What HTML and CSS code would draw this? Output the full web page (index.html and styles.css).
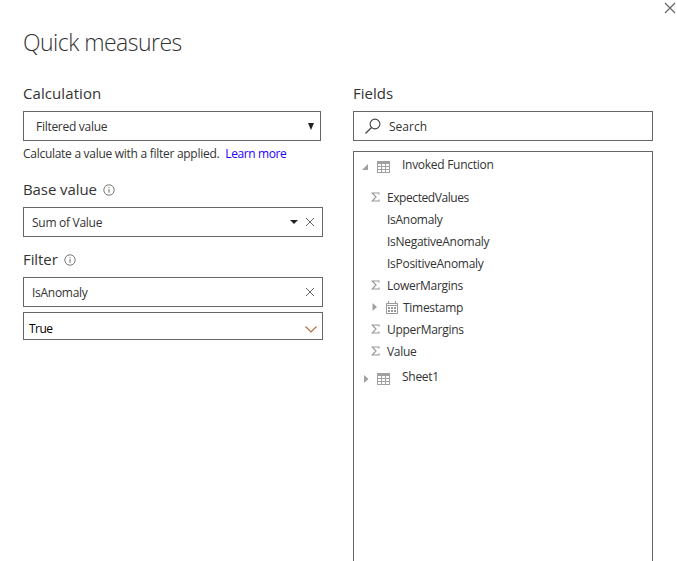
FILE: index.html
```html
<!DOCTYPE html>
<html lang="en">
<head>
<meta charset="utf-8">
<title>Quick measures</title>
<link rel="stylesheet" href="styles.css">
</head>
<body>
<svg class="defs" aria-hidden="true">
  <symbol id="table" viewBox="0 0 13 12"><path d="M0 0h13v12H0z" fill="#a0a0a0"/><path d="M1 3h3v2H1zM5 3h3v2H5zM9 3h3v2H9zM1 6h3v2H1zM5 6h3v2H5zM9 6h3v2H9zM1 9h3v2H1zM5 9h3v2H5zM9 9h3v2H9z" fill="#fff"/></symbol>
  <symbol id="sigma" viewBox="0 0 9 10"><path d="M8 2.5V1H1.200L5 5 1.200 9H8V7.500" fill="none" stroke="#999" stroke-width="1.2"/></symbol>
  <symbol id="closed" viewBox="0 0 5 8"><path d="M.5 0 5 4 .5 8z" fill="#a0a0a0"/></symbol>
  <symbol id="info" viewBox="0 0 12 12"><circle cx="6" cy="6" r="5.2" fill="none" stroke="#666" stroke-width=".9"/><path d="M6 5.2v3.5M6 3.2v1" stroke="#666"/></symbol>
  <symbol id="cross" viewBox="0 0 10 10"><path d="m1 1 8 8M9 1 1 9" fill="none" stroke="#666"/></symbol>
</svg>
<main class="dialog">
  <header class="header">
    <h1>Quick measures</h1>
    <button class="close" aria-label="Close"><svg width="12" height="12" viewBox="0 0 12 12"><path d="m1 1 10 10M11 1 1 11" stroke="#666" stroke-width="1.2"/></svg></button>
  </header>
  <div class="columns">
    <section class="column">
      <h2><span class="t-calc">Calculation</span></h2>
      <div class="box select"><span>Filtered value</span><svg width="6" height="7" viewBox="0 0 6 7"><path d="M0 0h6L3 7z" fill="#222"/></svg></div>
      <p class="hint"><span>Calculate a value with a filter applied.</span><a>Learn more</a></p>
      <h2 class="spaced"><span class="t-base">Base value</span><svg width="12" height="12"><use href="#info"/></svg></h2>
      <div class="box well"><span>Sum of Value</span><svg class="caret" width="8" height="4" viewBox="0 0 8 4"><path d="M0 0h8L4 4z" fill="#222"/></svg><svg width="10" height="10"><use href="#cross"/></svg></div>
      <h2><span class="t-base">Filter</span><svg width="12" height="12"><use href="#info"/></svg></h2>
      <div class="box well"><span>IsAnomaly</span><svg width="10" height="10"><use href="#cross"/></svg></div>
      <div class="box value"><span>True</span><svg width="12" height="7" viewBox="0 0 12 7"><path d="m.5.5 5.5 5.5L11.500.5" fill="none" stroke="#b46a3c" stroke-width="1.1"/></svg></div>
    </section>
    <section class="column">
      <h2><span>Fields</span></h2>
      <div class="box search"><svg width="16" height="16" viewBox="0 0 16 16"><circle cx="10" cy="6" r="4.9" fill="none" stroke="#444" stroke-width="1.1"/><path d="M6.500 9.500.5 15.500" stroke="#444" stroke-width="1.2"/></svg><span>Search</span></div>
      <div class="tree">
        <div class="row root"><svg class="arrow" width="6" height="6" viewBox="0 0 6 6"><path d="M6 0v6H0z" fill="#a0a0a0"/></svg><svg class="table" width="13" height="12"><use href="#table"/></svg><span>Invoked Function</span></div>
        <div class="fields">
          <div class="row"><svg class="sigma" width="9" height="10"><use href="#sigma"/></svg><span class="t-exp">ExpectedValues</span></div>
          <div class="row plain"><span>IsAnomaly</span></div>
          <div class="row plain"><span class="t-neg">IsNegativeAnomaly</span></div>
          <div class="row plain"><span>IsPositiveAnomaly</span></div>
          <div class="row"><svg class="sigma" width="9" height="10"><use href="#sigma"/></svg><span>LowerMargins</span></div>
          <div class="row date"><svg width="5" height="8"><use href="#closed"/></svg><svg class="calendar" width="12" height="13" viewBox="0 0 12 13"><path d="M.5 2.500h11v10H.5zM.5 4.500h11M2.500 0v3M9.500 0v3" fill="none" stroke="#999"/><path d="M2 6h2v2H2zM5 6h2v2H5zM8 6h2v2H8zM2 9h2v2H2zM5 9h2v2H5zM8 9h2v2H8z" fill="#999"/></svg><span>Timestamp</span></div>
          <div class="row"><svg class="sigma" width="9" height="10"><use href="#sigma"/></svg><span>UpperMargins</span></div>
          <div class="row"><svg class="sigma" width="9" height="10"><use href="#sigma"/></svg><span>Value</span></div>
        </div>
        <div class="row root sheet"><svg class="arrow" width="5" height="8"><use href="#closed"/></svg><svg class="table" width="13" height="12"><use href="#table"/></svg><span>Sheet1</span></div>
      </div>
    </section>
  </div>
</main>
</body>
</html>
```
FILE: styles.css
```css
* { box-sizing: border-box; }
body { margin: 0; background: #fff; color: #333; font: 12px/16px "Open Sans", "Noto Sans", sans-serif; letter-spacing: -.28px; overflow: hidden; }
.defs { display: none; }
svg { display: block; flex: none; }
span, a { white-space: nowrap; }
.dialog { height: 561px; display: flex; flex-direction: column; }
.header { height: 83px; padding: 2px 1px 0 23px; display: flex; justify-content: space-between; align-items: flex-start; }
h1 { margin: 24px 0 0; font-size: 23px; line-height: 32px; font-weight: 300; letter-spacing: -.53px; }
.close { display: block; border: 0; padding: 0; margin: 0; background: none; }
.columns { flex: 1; min-height: 0; display: grid; grid-template-columns: 300px 300px; gap: 30px; padding-left: 23px; }
.column { min-height: 0; display: flex; flex-direction: column; }
h2 { margin: 0 0 7px; height: 21px; display: flex; align-items: center; gap: 6px; flex: none; font-size: 15px; font-weight: 400; line-height: 21px; letter-spacing: 0; }
h2 svg { margin-top: 1px; }
.t-calc { letter-spacing: .08px; }
.t-base { letter-spacing: -.08px; }
.box { border: 1px solid #666; height: 30px; flex: none; display: flex; align-items: center; }
.box > span { margin-right: auto; padding-top: 2px; }
.select { width: 298px; padding: 0 6px 0 12px; }
.hint { margin: 5px 0 0; height: 16px; display: flex; gap: 6px; }
.hint a { color: #1a00ff; letter-spacing: -.4px; }
.spaced { margin-top: 17px; }
.well { padding: 0 7px 0 8px; }
.well + h2 { margin: 12px 0 7px; }
.caret { margin-right: 7px; }
.value { height: 28px; margin-top: 5px; padding: 3px 5px 0; }
.value span { color: #000; letter-spacing: -.5px; }
.value svg { margin-top: 4px; }
.search { padding-left: 11px; gap: 8px; }
.search span { letter-spacing: 0; }
.tree { flex: 1; margin-top: 10px; padding-top: 2px; border: 1px solid #666; border-bottom: 0; }
.row { height: 22px; display: flex; align-items: center; padding-left: 17px; }
.root { padding-left: 8px; }
.arrow { width: 6px; margin: 4px 9px 0 0; }
.table { margin: 3px 12px 0 0; }
.sigma { margin: 0 7px 0 0; }
.fields { padding-top: 10px; }
.fields span { padding-top: 1px; }
.t-exp { letter-spacing: -.43px; }
.plain { padding-left: 33px; }
.date { padding-left: 18px; }
.calendar { margin: 0 5px 0 9px; }
.sheet { margin-top: 4px; }
.sheet .arrow { margin-left: 1px; margin-right: 8px; }
```
